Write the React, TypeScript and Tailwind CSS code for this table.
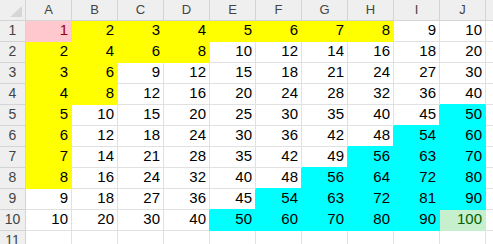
import React from "react";

type C = "pink" | "yellow" | "cyan" | "green" | "white";

const colorOf = (v: number): C => {
  if (v === 1) return "pink";
  if (v === 100) return "green";
  if (v <= 8) return "yellow";
  if (v >= 50) return "cyan";
  return "white";
};

const bgCls: Record<C, string> = {
  pink: "bg-[#ffc7ce] text-[#9c0006]",
  yellow: "bg-[#ffff00] text-black",
  cyan: "bg-[#00ffff] text-black",
  green: "bg-[#c6efce] text-[#006100]",
  white: "bg-white text-black",
};

const brCls: Record<C | "gray", string> = {
  pink: "border-r-[#ffc7ce]",
  yellow: "border-r-[#ffff00]",
  cyan: "border-r-[#00ffff]",
  green: "border-r-[#c6efce]",
  white: "border-r-[#e1e1e1]",
  gray: "border-r-[#e1e1e1]",
};

const bbCls: Record<C | "gray", string> = {
  pink: "border-b-[#ffc7ce]",
  yellow: "border-b-[#ffff00]",
  cyan: "border-b-[#00ffff]",
  green: "border-b-[#c6efce]",
  white: "border-b-[#e1e1e1]",
  gray: "border-b-[#e1e1e1]",
};

const cols = ["A", "B", "C", "D", "E", "F", "G", "H", "I", "J"];

const val = (r: number, c: number) => (r <= 10 && c <= 10 ? r * c : 0);
const col = (r: number, c: number): C => (r <= 10 && c <= 10 ? colorOf(r * c) : "white");

function Cell({ r, c }: { r: number; c: number }) {
  const v = val(r, c);
  const own = col(r, c);
  const right = own !== "white" ? own : col(r, c + 1) !== "white" ? col(r, c + 1) : "gray";
  const bottom = own !== "white" ? own : col(r + 1, c) !== "white" ? col(r + 1, c) : "gray";
  return (
    <div
      className={`w-[46px] h-[21px] shrink-0 border-r border-b flex items-end justify-end pr-[3px] pb-[2px] text-[15px] leading-[18px] ${bgCls[own]} ${brCls[right]} ${bbCls[bottom]}`}
    >
      {v ? v : ""}
    </div>
  );
}

export default function App() {
  const rows = Array.from({ length: 11 }, (_, i) => i + 1);
  return (
    <div className="w-[493px] h-[244px] overflow-hidden bg-white font-['Liberation_Sans',Arial,sans-serif]">
      <div className="flex h-[21px]">
        <div className="w-[26px] h-[21px] shrink-0 bg-[#efefef] border-r border-b border-[#d4d4d4] relative">
          <svg width="25" height="20" className="absolute left-0 top-0">
            <polygon points="22,6 22,17 10,17" fill="#d6d6d6" />
          </svg>
        </div>
        {cols.map((l) => (
          <div
            key={l}
            className="w-[46px] h-[21px] shrink-0 bg-[#efefef] border-r border-b border-[#d4d4d4] flex items-end justify-center pb-[3px] text-[13px] leading-[15px] text-[#444444]"
          >
            {l}
          </div>
        ))}
        <div className="flex-1 h-[21px] bg-[#efefef] border-b border-[#d4d4d4]" />
      </div>
      {rows.map((r) => (
        <div key={r} className="flex h-[21px]">
          <div className="w-[26px] h-[21px] shrink-0 bg-[#efefef] border-r border-b border-[#d4d4d4] flex items-end justify-center pb-[2px] text-[14px] leading-[17px] text-[#444444]">
            {r}
          </div>
          {cols.map((_, ci) => (
            <Cell key={ci} r={r} c={ci + 1} />
          ))}
          <div className="flex-1 h-[21px] bg-white border-b border-[#e1e1e1]" />
        </div>
      ))}
    </div>
  );
}
